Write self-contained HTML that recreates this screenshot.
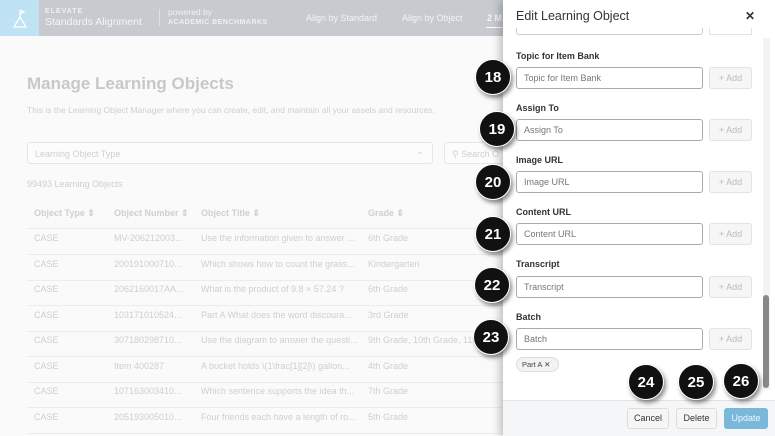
<!DOCTYPE html>
<html><head><style>
*{margin:0;padding:0;box-sizing:border-box}
body{width:775px;height:436px;overflow:hidden;position:relative;background:#fafafa;font-family:"Liberation Sans",sans-serif}
.a{position:absolute}
.hdr{left:0;top:0;width:775px;height:36px;background:#c7cbcf}
.logo{left:0;top:0;width:39px;height:36px;background:#bfe2f4}
.t{color:#cfcfcf;font-size:9px;white-space:nowrap}
.row{left:27px;width:480px;height:25.5px;border-bottom:1px solid #ececec}
.panel{left:503px;top:0;width:272px;height:436px;background:#fff;box-shadow:-3px 0 8px rgba(0,0,0,.25)}
.lbl{font-size:9px;font-weight:bold;color:#333}
.inp{width:187px;height:22px;border:1px solid #aaa;border-radius:3px;font-size:9px;color:#777;padding:5px 7px}
.add{width:43px;height:22px;border:1px solid #e3e3e3;border-radius:3px;background:#f6f6f6;font-size:9px;color:#bbb;text-align:center;line-height:20px}
.b{width:36px;height:36px;border-radius:50%;background:#111;color:#fff;font-size:15px;font-weight:bold;text-align:center;line-height:36px;box-shadow:2px 3px 4px rgba(0,0,0,.45);border:1px solid #fff}
.btn{height:21px;border:1px solid #ddd;border-radius:3px;background:#f6f6f6;font-size:9px;color:#333;text-align:center;line-height:19px}
</style></head><body>
<div class="a hdr"></div>
<div class="a logo"><svg width="39" height="36"><g stroke="#fff" stroke-width="1.3" fill="none"><path d="M20 10v7M20 10l4 2-4 2M14 27l6-10 6 10z"/></g></svg></div>
<div class="a" style="left:45px;top:8px;font-size:7px;font-weight:bold;color:#f0f0f0;letter-spacing:1px">ELEVATE</div>
<div class="a" style="left:45px;top:16px;font-size:10.5px;color:#f4f4f4">Standards Alignment</div>
<div class="a" style="left:159px;top:9px;width:1px;height:17px;background:#e0e0e0"></div>
<div class="a" style="left:168px;top:7px;font-size:8.5px;color:#f0f0f0">powered by</div>
<div class="a" style="left:168px;top:19px;font-size:7px;font-weight:bold;color:#f0f0f0;letter-spacing:.5px">ACADEMIC BENCHMARKS</div>
<div class="a" style="left:306px;top:13px;font-size:9px;color:#f4f4f4">Align by Standard</div>
<div class="a" style="left:402px;top:13px;font-size:9px;color:#f4f4f4">Align by Object</div>
<div class="a" style="left:487px;top:13px;font-size:9px;color:#f4f4f4;font-weight:bold">2 M</div>
<div class="a" style="left:486px;top:27px;width:20px;height:1px;background:#fff"></div>

<div class="a" style="left:27px;top:74px;font-size:17px;font-weight:bold;color:#c8c8c8">Manage Learning Objects</div>
<div class="a t" style="left:27px;top:105px;font-size:8.5px">This is the Learning Object Manager where you can create, edit, and maintain all your assets and resources.</div>
<div class="a" style="left:27px;top:142px;width:406px;height:22px;border:1px solid #e6e6e6;border-radius:3px;background:#fcfcfc"></div>
<div class="a t" style="left:35px;top:149px">Learning Object Type</div>
<div class="a t" style="left:416px;top:146px">⌄</div>
<div class="a" style="left:444px;top:142px;width:70px;height:22px;border:1px solid #e6e6e6;border-radius:3px;background:#fcfcfc"></div>
<div class="a t" style="left:452px;top:149px">⚲ Search O</div>
<div class="a t" style="left:27px;top:179px">99493 Learning Objects</div>

<div class="a row" style="top:203px"></div>
<div class="a t" style="left:34px;top:208px;font-weight:bold">Object Type ⇕</div>
<div class="a t" style="left:114px;top:208px;font-weight:bold">Object Number ⇕</div>
<div class="a t" style="left:201px;top:208px;font-weight:bold">Object Title ⇕</div>
<div class="a t" style="left:368px;top:208px;font-weight:bold">Grade ⇕</div>
<div class="a row" style="top:229px"></div>
<div class="a t" style="left:34px;top:233px">CASE</div><div class="a t" style="left:114px;top:233px">MV-206212003...</div><div class="a t" style="left:201px;top:233px">Use the information given to answer ...</div><div class="a t" style="left:368px;top:233px">6th Grade</div>
<div class="a row" style="top:255px"></div>
<div class="a t" style="left:34px;top:259px">CASE</div><div class="a t" style="left:114px;top:259px">200191000710...</div><div class="a t" style="left:201px;top:259px">Which shows how to count the grass...</div><div class="a t" style="left:368px;top:259px">Kindergarten</div>
<div class="a row" style="top:280px"></div>
<div class="a t" style="left:34px;top:284px">CASE</div><div class="a t" style="left:114px;top:284px">2062160017AA...</div><div class="a t" style="left:201px;top:284px">What is the product of 9.8 × 57.24 ?</div><div class="a t" style="left:368px;top:284px">6th Grade</div>
<div class="a row" style="top:306px"></div>
<div class="a t" style="left:34px;top:310px">CASE</div><div class="a t" style="left:114px;top:310px">103171010524...</div><div class="a t" style="left:201px;top:310px">Part A What does the word discoura...</div><div class="a t" style="left:368px;top:310px">3rd Grade</div>
<div class="a row" style="top:331px"></div>
<div class="a t" style="left:34px;top:335px">CASE</div><div class="a t" style="left:114px;top:335px">307180298710...</div><div class="a t" style="left:201px;top:335px">Use the diagram to answer the questi...</div><div class="a t" style="left:368px;top:335px">9th Grade, 10th Grade, 11t</div>
<div class="a row" style="top:357px"></div>
<div class="a t" style="left:34px;top:361px">CASE</div><div class="a t" style="left:114px;top:361px">Item 400287</div><div class="a t" style="left:201px;top:361px">A bucket holds \(1\frac[1][2]\) gallon...</div><div class="a t" style="left:368px;top:361px">4th Grade</div>
<div class="a row" style="top:382px"></div>
<div class="a t" style="left:34px;top:386px">CASE</div><div class="a t" style="left:114px;top:386px">107163003410...</div><div class="a t" style="left:201px;top:386px">Which sentence supports the idea th...</div><div class="a t" style="left:368px;top:386px">7th Grade</div>
<div class="a row" style="top:408px"></div>
<div class="a t" style="left:34px;top:412px">CASE</div><div class="a t" style="left:114px;top:412px">205193005010...</div><div class="a t" style="left:201px;top:412px">Four friends each have a length of ro...</div><div class="a t" style="left:368px;top:412px">5th Grade</div>

<div class="a panel"></div>
<div class="a" style="left:516px;top:9px;font-size:12.5px;color:#333">Edit Learning Object</div>
<div class="a" style="left:745px;top:9px;font-size:12px;font-weight:bold;color:#333">✕</div>
<div class="a" style="left:516px;top:28px;width:187px;height:7px;border:1px solid #ccc;border-top:none;border-radius:0 0 3px 3px"></div>
<div class="a" style="left:709px;top:28px;width:43px;height:7px;border:1px solid #e3e3e3;border-top:none"></div>
<div class="a" style="left:763px;top:38px;width:7px;height:352px;background:#f3f3f3"></div>
<div class="a" style="left:763px;top:295px;width:6px;height:93px;background:#888;border-radius:3px"></div>

<div class="a lbl" style="left:516px;top:51px">Topic for Item Bank</div>
<div class="a inp" style="left:516px;top:67px">Topic for Item Bank</div><div class="a add" style="left:709px;top:67px">+ Add</div>
<div class="a lbl" style="left:516px;top:103px">Assign To</div>
<div class="a inp" style="left:516px;top:119px">Assign To</div><div class="a add" style="left:709px;top:119px">+ Add</div>
<div class="a lbl" style="left:516px;top:155px">Image URL</div>
<div class="a inp" style="left:516px;top:171px">Image URL</div><div class="a add" style="left:709px;top:171px">+ Add</div>
<div class="a lbl" style="left:516px;top:207px">Content URL</div>
<div class="a inp" style="left:516px;top:223px">Content URL</div><div class="a add" style="left:709px;top:223px">+ Add</div>
<div class="a lbl" style="left:516px;top:259px">Transcript</div>
<div class="a inp" style="left:516px;top:276px">Transcript</div><div class="a add" style="left:709px;top:276px">+ Add</div>
<div class="a lbl" style="left:516px;top:312px">Batch</div>
<div class="a inp" style="left:516px;top:328px">Batch</div><div class="a add" style="left:709px;top:328px">+ Add</div>
<div class="a" style="left:516px;top:357px;width:43px;height:15px;border:1px solid #ddd;border-radius:8px;background:#f1f3f4;font-size:7.5px;color:#444;line-height:13px;padding-left:5px">Part A ✕</div>

<div class="a" style="left:503px;top:400px;width:272px;height:36px;background:#f5f6f7;border-top:1px solid #e3e3e3"></div>
<div class="a btn" style="left:627px;top:408px;width:42px">Cancel</div>
<div class="a btn" style="left:676px;top:408px;width:41px">Delete</div>
<div class="a btn" style="left:724px;top:408px;width:44px;background:#7ab8d9;border-color:#7ab8d9;color:#f0f8ff">Update</div>

<div class="a b" style="left:475px;top:59px">18</div>
<div class="a b" style="left:479px;top:111px">19</div>
<div class="a b" style="left:475px;top:164px">20</div>
<div class="a b" style="left:475px;top:216px">21</div>
<div class="a b" style="left:474px;top:267px">22</div>
<div class="a b" style="left:473px;top:319px">23</div>
<div class="a b" style="left:628px;top:364px">24</div>
<div class="a b" style="left:678px;top:364px">25</div>
<div class="a b" style="left:723px;top:363px">26</div>
</body></html>
